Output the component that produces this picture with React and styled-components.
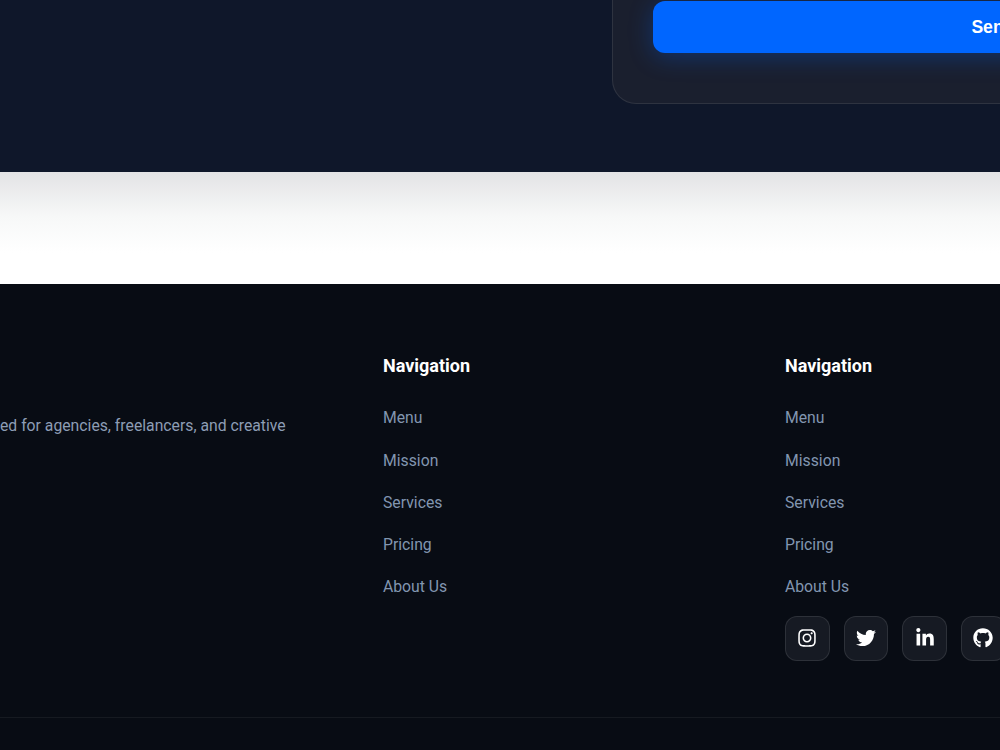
import React from "react";
import styled, { createGlobalStyle } from "styled-components";
import { FaInstagram, FaTwitter, FaLinkedinIn, FaGithub } from "react-icons/fa";

const Global = createGlobalStyle`
  html, body { margin: 0; padding: 0; background: #fff; overflow: hidden; width: 1000px; height: 750px; }
  #root { width: 1000px; height: 750px; overflow: hidden; }
  * { box-sizing: border-box; }
`;

const Page = styled.div`
  width: 1000px;
  height: 750px;
  overflow: hidden;
  font-family: Roboto, "Liberation Sans", sans-serif;
`;

const Contact = styled.section`
  height: 172px;
  background: #0f172a;
  display: flex;
  justify-content: flex-start;
  align-items: flex-start;
  padding-left: 612px;
  overflow: hidden;
`;

const Card = styled.div`
  flex: none;
  width: 841px;
  height: 104px;
  padding: 1px 40px 0;
  background: #1a1f2e;
  border: 1px solid rgba(255, 255, 255, 0.09);
  border-top: none;
  border-radius: 0 0 24px 24px;
`;

const SendButton = styled.button`
  display: block;
  width: 100%;
  height: 52px;
  border: none;
  border-radius: 12px;
  background: #0066ff;
  color: #fff;
  font-family: "Liberation Sans", Arial, sans-serif;
  font-size: 17.6px;
  font-weight: 700;
  box-shadow: 0 4px 24px rgba(0, 102, 255, 0.3);
`;

const Band = styled.div`
  height: 112px;
  background: linear-gradient(180deg, #e3e3e5 0%, #f7f8f8 40%, #ffffff 72%);
`;

const Footer = styled.footer`
  height: 466px;
  background: #080c14;
  overflow: hidden;
`;

const Columns = styled.div`
  display: grid;
  grid-template-columns: 383px 402px 300px;
  height: 434px;
  padding-top: 70px;
  border-bottom: 1px solid rgba(255, 255, 255, 0.06);
`;

const Brand = styled.div`
  min-width: 0;
  overflow: hidden;
  padding-top: 62px;
`;

const Description = styled.p`
  margin: 0;
  white-space: nowrap;
  color: #8d9db5;
  font-size: 15.75px;
  line-height: 19px;
`;

const Column = styled.div`
  display: flex;
  flex-direction: column;
  align-items: flex-start;
`;

const Heading = styled.h4`
  margin: 0 0 30.4px;
  color: #fff;
  font-size: 18px;
  font-weight: 700;
  line-height: 24px;
`;

const LinkList = styled.ul`
  list-style: none;
  margin: 0;
  padding: 0;
  display: flex;
  flex-direction: column;
  gap: 23.2px;
`;

const FooterLink = styled.a`
  display: block;
  color: #8296b0;
  font-size: 15.75px;
  line-height: 19px;
  text-decoration: none;
`;

const Socials = styled.div`
  display: flex;
  gap: 13.8px;
  margin-top: 19.6px;
`;

const SocialButton = styled.a`
  flex: none;
  width: 44.8px;
  height: 44.8px;
  display: flex;
  align-items: center;
  justify-content: center;
  color: #fff;
  background: #161a23;
  border: 1px solid rgba(255, 255, 255, 0.1);
  border-radius: 12px;
  font-size: 20px;
`;

const links = ["Menu", "Mission", "Services", "Pricing", "About Us"];

const NavColumn = ({ children }) => (
  <Column>
    <Heading>Navigation</Heading>
    <LinkList>
      {links.map((l) => (
        <li key={l}><FooterLink>{l}</FooterLink></li>
      ))}
    </LinkList>
    {children}
  </Column>
);

export default function App() {
  return (
    <Page>
      <Global />
      <Contact>
        <Card>
          <SendButton>Send Message</SendButton>
        </Card>
      </Contact>
      <Band />
      <Footer>
        <Columns>
          <Brand>
            <Description>ed for agencies, freelancers, and creative</Description>
          </Brand>
          <NavColumn />
          <NavColumn>
            <Socials>
              <SocialButton><FaInstagram /></SocialButton>
              <SocialButton><FaTwitter /></SocialButton>
              <SocialButton><FaLinkedinIn /></SocialButton>
              <SocialButton><FaGithub /></SocialButton>
            </Socials>
          </NavColumn>
        </Columns>
      </Footer>
    </Page>
  );
}
